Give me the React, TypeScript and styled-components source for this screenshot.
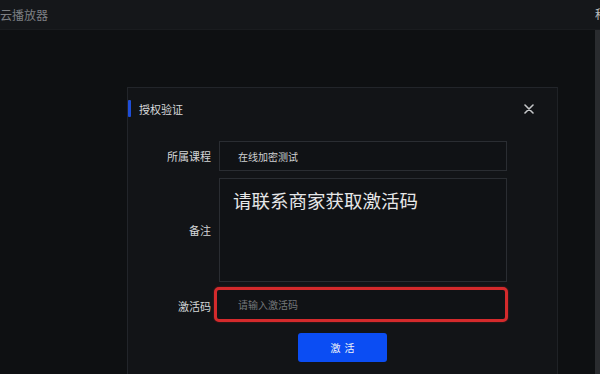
import React from "react";
import styled, { createGlobalStyle } from "styled-components";

const GlobalStyle = createGlobalStyle`
  html, body {
    margin: 0;
    padding: 0;
    background: #0e1012;
    font-family: "Noto Sans CJK SC", "Noto Sans", sans-serif;
  }
  * { box-sizing: border-box; }
`;

interface iRow {
    label: string;
    children?: React.ReactNode;
}

const FormRow: React.FC<iRow> = ({ label, children }: iRow) => {
    return (
        <Row>
            <Label>{label}</Label>
            {children}
        </Row>
    );
};

const App: React.FC = () => {
    return (
        <Page>
            <GlobalStyle />
            <TitleBar>
                <AppName>云播放器</AppName>
                <Corner>科</Corner>
            </TitleBar>
            <Main>
                <Stage>
                    <Dialog>
                        <Header>
                            <Accent />
                            <Title>授权验证</Title>
                            <Close>
                                <svg width="10" height="10" viewBox="0 0 10 10">
                                    <path d="M1 1L9 9M9 1L1 9" stroke="#c4c6c8" strokeWidth="1.6" strokeLinecap="round" />
                                </svg>
                            </Close>
                        </Header>
                        <Form>
                            <FormRow label="所属课程">
                                <Field>在线加密测试</Field>
                            </FormRow>
                            <FormRow label="备注">
                                <Note>请联系商家获取激活码</Note>
                            </FormRow>
                            <FormRow label="激活码">
                                <CodeInput placeholder="请输入激活码" />
                            </FormRow>
                        </Form>
                        <Actions>
                            <Button>激活</Button>
                        </Actions>
                    </Dialog>
                </Stage>
                <Track />
            </Main>
        </Page>
    );
};
export default App;

const Page = styled.div`
    width: 600px;
    height: 374px;
    overflow: hidden;
    display: flex;
    flex-direction: column;
    background: #0e1012;
`
const TitleBar = styled.div`
    height: 30px;
    flex-shrink: 0;
    display: flex;
    align-items: center;
    justify-content: space-between;
    background: #15171a;
    border-bottom: 1px solid #1a1c1f;
    overflow: hidden;
`
const AppName = styled.span`
    font-size: 12px;
    color: #7c7f83;
    padding-bottom: 1px;
`
const Corner = styled.span`
    font-size: 12px;
    color: #b9bbbd;
    margin-right: -7px;
    padding-bottom: 2px;
`
const Main = styled.div`
    flex: 1;
    display: flex;
    min-height: 0;
`
const Stage = styled.div`
    flex: 1;
    padding-top: 57px;
    padding-left: 127px;
    overflow: hidden;
`
const Track = styled.div`
    width: 5px;
    background: #2a2c2f;
`
const Dialog = styled.div`
    width: 431px;
    height: 320px;
    background: #121417;
    border: 1px solid #22252a;
    border-right-color: #1f2226;
    display: flex;
    flex-direction: column;
`
const Header = styled.div`
    display: flex;
    align-items: center;
    height: 17px;
    margin-top: 12px;
`
const Accent = styled.div`
    width: 3px;
    height: 17px;
    background: #1f4ed8;
    border-radius: 1px;
`
const Title = styled.span`
    margin-left: 8px;
    font-size: 11px;
    color: #d8dadc;
`
const Close = styled.div`
    margin-left: auto;
    margin-right: 23px;
    width: 10px;
    height: 10px;
    display: flex;
`
const Form = styled.div`
    margin-top: 24px;
    display: flex;
    flex-direction: column;
    gap: 7px;
`
const Row = styled.div`
    display: grid;
    grid-template-columns: 83px 288px;
    column-gap: 8px;
    align-items: center;
`
const Label = styled.span`
    text-align: right;
    font-size: 11px;
    color: #d4d6d8;
`
const Field = styled.div`
    height: 30px;
    display: flex;
    align-items: center;
    padding-left: 18px;
    font-size: 10px;
    color: #cfd1d3;
    background: #101215;
    border: 1px solid #2a2d32;
`
const Note = styled.div`
    height: 104px;
    padding: 8px 0 0 13px;
    font-size: 18.5px;
    line-height: 26px;
    color: #e6e7e8;
    background: #101215;
    border: 1px solid #2a2d32;
`
const CodeInput = styled.input`
    margin-left: -5px;
    margin-top: -2px;
    width: 294px;
    height: 35px;
    padding-left: 21px;
    font-family: inherit;
    font-size: 10px;
    color: #cfd1d3;
    background: #101215;
    border: 3px solid #d42a2c;
    border-radius: 5px;
    box-shadow: 0 0 2px rgba(212, 42, 44, 0.5);
    outline: none;
    &::placeholder {
        color: #74777b;
    }
`
const Actions = styled.div`
    display: flex;
    justify-content: center;
    margin-top: 11px;
`
const Button = styled.button`
    width: 89px;
    height: 29px;
    border: none;
    border-radius: 3px;
    background: #0b4df3;
    color: #f2f4f8;
    font-family: inherit;
    font-size: 10px;
    letter-spacing: 4px;
    text-indent: 4px;
`
